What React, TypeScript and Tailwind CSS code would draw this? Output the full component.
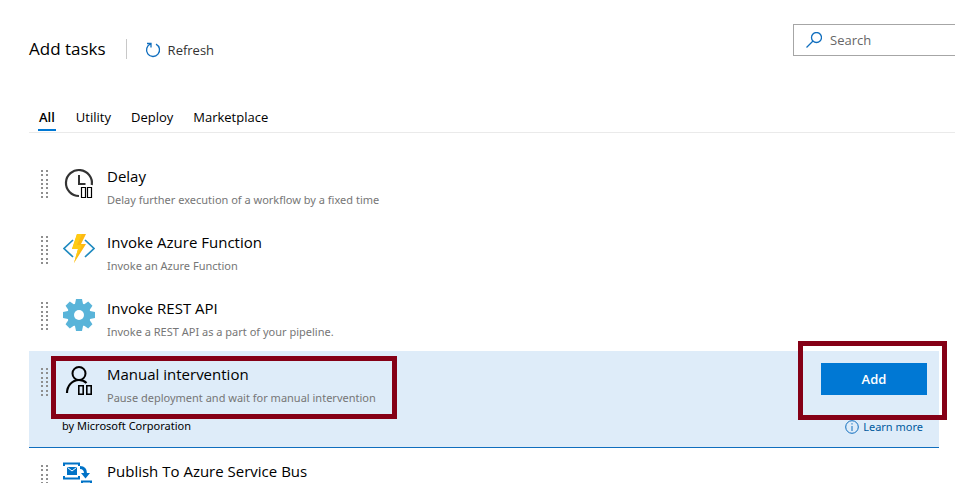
import type { ReactNode } from 'react';

function Grip() {
  return (
    <svg className="mt-[17px] h-7 w-2 shrink-0" viewBox="0 0 8 28" fill="#8f8f8f" aria-hidden="true">
      {[0, 4, 9, 13, 17, 22, 26].map((y) => (
        <g key={y}>
          <rect x="0" y={y} width="2" height="2" />
          <rect x="5" y={y} width="2" height="2" />
        </g>
      ))}
    </svg>
  );
}

function DelayIcon() {
  return (
    <svg className="size-8" viewBox="0 0 32 32" fill="none" aria-hidden="true">
      <path d="M16 29A13 13 0 1 1 28.800 18" stroke="#333" strokeWidth="2.200" />
      <path d="M16 8v9h6.500" stroke="#333" strokeWidth="2" />
      <path d="M18.500 20.500h4v10h-4zM24.500 20.500h4v10h-4z" stroke="#000" strokeWidth="1.200" fill="#fff" />
    </svg>
  );
}

function FunctionIcon() {
  return (
    <svg className="size-8" viewBox="0 0 32 32" fill="none" aria-hidden="true">
      <path d="M10 7L1 15.500l9 8.500M22 7l9 8.500-9 8.500" stroke="#1f8ac0" strokeWidth="1.700" />
      <path d="M14 1h9l-5 10h5L11 30l4-14H9z" fill="#fdb913" />
      <path d="M14 1h5l-5 11h5l-8 18 4-14H9z" fill="#ffcb13" />
    </svg>
  );
}

function GearIcon() {
  return (
    <svg className="size-8" viewBox="-16 -16 32 32" aria-hidden="true">
      <g fill="#59b4d9">
        {[0, 45, 90, 135].map((angle) => (
          <path key={angle} d="M-3-16h6l1 5v22l-1 5h-6l-1-5v-22z" transform={`rotate(${angle})`} />
        ))}
        <circle r="11.800" />
      </g>
      <circle r="5" fill="#fff" />
    </svg>
  );
}

function PersonIcon() {
  return (
    <svg className="size-8" viewBox="0 0 32 32" fill="none" stroke="#000" aria-hidden="true">
      <circle cx="16" cy="8.500" r="6.500" strokeWidth="2" />
      <path d="M4 28c0-7 5-13 12-13 3 0 5.500 1 7.500 3" strokeWidth="2.200" />
      <path d="M15.800 20.800h4.400v8.400h-4.400zM23.800 20.800h4.400v8.400h-4.400z" strokeWidth="1.600" />
    </svg>
  );
}

function ServiceBusIcon() {
  return (
    <svg className="size-8" viewBox="0 0 32 32" fill="none" aria-hidden="true">
      <path d="M1 4V1.500h15V4M1 14v2.500h15V14" stroke="#0072c6" strokeWidth="2" />
      <path d="M4 5h10v8H4z" fill="#0072c6" />
      <path d="M4.500 5.500L9 9l4.500-3.500" stroke="#fff" />
      <path d="M17 5.500c4 0 5.500 2 5.500 6" stroke="#0072c6" strokeWidth="3" />
      <path d="M18 11h9l-4.500 5.500z" fill="#0072c6" />
      <path d="M19 30V19.500h9V30" stroke="#0072c6" strokeWidth="2" />
      <path d="M21 22h5v6h-5z" fill="#0072c6" />
    </svg>
  );
}

function Task({ icon, title, text }: { icon: ReactNode; title: string; text?: string }) {
  return (
    <div className="flex h-[66px] min-w-0 items-start pl-3">
      <Grip />
      <div className="mt-[14px] ml-[14px] shrink-0">{icon}</div>
      <div className="ml-3 pt-[11px]">
        <h2 className="text-[15px] leading-6">{title}</h2>
        {text && <p className="mt-[3px] font-['Noto_Sans',sans-serif] text-[11px] leading-[18px] text-[#767676]">{text}</p>}
      </div>
    </div>
  );
}

export default function App() {
  return (
    <main className="h-screen overflow-hidden bg-white pl-[29px] font-['Open_Sans',sans-serif] text-black">
      <header className="flex items-start justify-between pt-6">
        <div className="flex items-center pt-3">
          <h1 className="text-[17px] leading-[26px]">Add tasks</h1>
          <div className="ml-5 h-5 w-px bg-[#c8c8c8]" />
          <button className="ml-[18px] flex items-center gap-[7px] pt-0.5 text-[13px] leading-6 text-[#333]">
            <svg className="size-4" viewBox="0 0 16 16" fill="none" stroke="#106ebe" aria-hidden="true">
              <path d="M2 1.500h4v4M5.500 2A6.500 6.500 0 1 0 11 2.200" strokeWidth="1.300" />
            </svg>
            Refresh
          </button>
        </div>
        <label className="flex h-8 w-[162px] items-center border border-r-0 border-[#a6a6a6] pl-3">
          <svg className="size-4 shrink-0" viewBox="0 0 16 16" fill="none" stroke="#106ebe" aria-hidden="true">
            <circle cx="10.500" cy="5.500" r="5" strokeWidth="1.300" />
            <path d="M7 9L.5 15.500" strokeWidth="1.300" />
          </svg>
          <input aria-label="Search" placeholder="Search" className="ml-2 w-full min-w-0 pt-0.5 text-[13px] outline-none placeholder:text-[#666]" />
        </label>
      </header>

      <nav className="mt-[45px] flex gap-5 border-b border-[#eaeaea] pl-[9px] text-[13px] leading-5">
        <button className="mb-px h-6 border-b-2 border-[#0078d4] px-px pb-0.5 font-semibold">All</button>
        <button className="h-6 pb-1">Utility</button>
        <button className="h-6 pb-1">Deploy</button>
        <button className="h-6 pb-1">Marketplace</button>
      </nav>

      <section className="mt-5 mr-4">
        <Task icon={<DelayIcon />} title="Delay" text="Delay further execution of a workflow by a fixed time" />
        <Task icon={<FunctionIcon />} title="Invoke Azure Function" text="Invoke an Azure Function" />
        <Task icon={<GearIcon />} title="Invoke REST API" text="Invoke a REST API as a part of your pipeline." />
        <div className="relative border-b border-[#106ebe] bg-[#deecf9]">
          <div className="flex justify-between">
            <Task icon={<PersonIcon />} title="Manual intervention" text="Pause deployment and wait for manual intervention" />
            <button className="mt-3 mr-3 h-8 w-[106px] bg-[#0078d4] pt-0.5 text-[13px] font-semibold text-white">Add</button>
          </div>
          <div className="flex h-[30px] justify-between pr-4 pl-[33px] font-['Noto_Sans',sans-serif] text-[11px] leading-[18px]">
            <span>by Microsoft Corporation</span>
            <a href="#" className="flex h-5 items-center gap-1 text-[#005a9e]">
              <svg className="size-[14px]" viewBox="0 0 14 14" fill="none" stroke="#106ebe" aria-hidden="true">
                <circle cx="7" cy="7" r="6.300" />
                <path d="M7 6v5M7 3.200v1.300" />
              </svg>
              Learn more
            </a>
          </div>
          <div className="pointer-events-none absolute top-[5px] left-[22px] h-[63px] w-[346px] border-[5px] border-[#850016]" />
          <div className="pointer-events-none absolute -top-[10px] -right-2 h-[79px] w-[149px] border-[5px] border-[#850016]" />
        </div>
        <Task icon={<ServiceBusIcon />} title="Publish To Azure Service Bus" />
      </section>
    </main>
  );
}
